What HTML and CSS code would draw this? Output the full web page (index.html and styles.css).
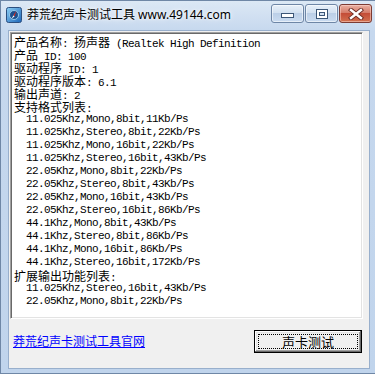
FILE: index.html
```html
<!DOCTYPE html>
<html lang="zh-CN">

<head>
    <meta charset="UTF-8">
    <title>莽荒纪声卡测试工具</title>
    <link rel="stylesheet" href="styles.css">
</head>

<body>
    <div class="window">
        <div class="titlebar">
            <svg class="app-icon" width="16" height="16" viewBox="0 0 16 16">
                <defs>
                    <linearGradient id="ig" x1="0" y1="0" x2="1" y2="1">
                        <stop offset="0" stop-color="#8fd0f5"/>
                        <stop offset="1" stop-color="#1a64b8"/>
                    </linearGradient>
                </defs>
                <rect x="0.5" y="0.5" width="15" height="15" rx="2" fill="url(#ig)" stroke="#2b4f80"/>
                <circle cx="8" cy="8" r="4.5" fill="#1d4f8c" stroke="#a9dcf7" stroke-width="0.8"/>
                <path d="M10.5 3.5 L7.3 8.6 L8.6 9.3 Z" fill="#e02a1c"/>
                <path d="M7.3 8.6 L5.5 12 L8.6 9.3 Z" fill="#ffffff"/>
            </svg>
            <span class="title">莽荒纪声卡测试工具 www.49144.com</span>
            <div class="caption-buttons">
                <div class="cap-btn">
                    <svg width="13" height="6" viewBox="0 0 13 6"><rect x="0.5" y="0.5" width="12" height="4" fill="#fff" stroke="#3c5677"/></svg>
                </div>
                <div class="cap-btn">
                    <svg width="12" height="10" viewBox="0 0 12 10"><rect x="0.5" y="0.5" width="11" height="9" fill="#fff" stroke="#3c5677"/><rect x="3.5" y="3.5" width="5" height="3" fill="#d2e0f0" stroke="#3c5677"/></svg>
                </div>
                <div class="cap-btn close">
                    <svg width="16" height="12" viewBox="0 0 16 12">
                        <path d="M3 2 L13 10 M13 2 L3 10" stroke="#6b2a22" stroke-width="4.2" stroke-linecap="square"/>
                        <path d="M3 2 L13 10 M13 2 L3 10" stroke="#fff" stroke-width="2.4" stroke-linecap="square"/>
                    </svg>
                </div>
            </div>
        </div>

        <div class="client">
            <div class="editbox">
                <div class="line"><span class="zh">产品名称</span>: <span class="zh">扬声器</span> (Realtek High Definition</div>
                <div class="line"><span class="zh">产品</span> ID: 100</div>
                <div class="line"><span class="zh">驱动程序</span> ID: 1</div>
                <div class="line"><span class="zh">驱动程序版本</span>: 6.1</div>
                <div class="line"><span class="zh">输出声道</span>: 2</div>
                <div class="line"><span class="zh">支持格式列表</span>:</div>
                <div class="line">  11.025Khz,Mono,8bit,11Kb/Ps</div>
                <div class="line">  11.025Khz,Stereo,8bit,22Kb/Ps</div>
                <div class="line">  11.025Khz,Mono,16bit,22Kb/Ps</div>
                <div class="line">  11.025Khz,Stereo,16bit,43Kb/Ps</div>
                <div class="line">  22.05Khz,Mono,8bit,22Kb/Ps</div>
                <div class="line">  22.05Khz,Stereo,8bit,43Kb/Ps</div>
                <div class="line">  22.05Khz,Mono,16bit,43Kb/Ps</div>
                <div class="line">  22.05Khz,Stereo,16bit,86Kb/Ps</div>
                <div class="line">  44.1Khz,Mono,8bit,43Kb/Ps</div>
                <div class="line">  44.1Khz,Stereo,8bit,86Kb/Ps</div>
                <div class="line">  44.1Khz,Mono,16bit,86Kb/Ps</div>
                <div class="line">  44.1Khz,Stereo,16bit,172Kb/Ps</div>
                <div class="line"><span class="zh">扩展输出功能列表</span>:</div>
                <div class="line">  11.025Khz,Stereo,16bit,43Kb/Ps</div>
                <div class="line">  22.05Khz,Mono,8bit,22Kb/Ps</div>
            </div>

            <div class="footer">
                <a class="site-link" href="#">莽荒纪声卡测试工具官网</a>
                <div class="test-btn">声卡测试</div>
            </div>
        </div>
    </div>
</body>

</html>
```

FILE: styles.css
```css
body {
    margin: 0;
    font-family: "Noto Sans CJK SC", sans-serif;
}

.window {
    box-sizing: border-box;
    width: 375px;
    height: 374px;
    border: 1px solid #6f87a6;
    border-right: none;
    background: linear-gradient(#dce8f5, #c6d8ee 30px, #c0d4ec);
    display: flex;
    flex-direction: column;
}

.titlebar {
    height: 29px;
    display: flex;
    align-items: flex-start;
    flex-shrink: 0;
}

.app-icon {
    margin: 6px 0 0 5px;
}

.title {
    margin: 5px 0 0 5px;
    font-family: "Noto Sans", "Noto Sans CJK SC", sans-serif;
    font-size: 12px;
    line-height: 18px;
    color: #000;
    text-shadow: 0 0 6px #fff, 0 0 3px #fff;
}

.caption-buttons {
    margin: 3px 3px 0 auto;
    display: flex;
    gap: 1px;
}

.cap-btn {
    box-sizing: border-box;
    width: 33px;
    height: 19px;
    border: 1px solid #6e86a6;
    border-radius: 3px;
    background: linear-gradient(#e8f0f9, #d3e1f1 45%, #bccfe7 50%, #cadcf1);
    box-shadow: inset 0 0 0 1px rgba(255, 255, 255, 0.55);
    display: flex;
    align-items: center;
    justify-content: center;
}

.cap-btn:first-child svg {
    margin-top: 5px;
}

.cap-btn.close {
    border-color: #7c3b33;
    background: linear-gradient(#eab0a2, #d57c69 45%, #c44d37 50%, #d2704f);
    box-shadow: inset 0 0 0 1px rgba(255, 220, 210, 0.5);
}

.client {
    flex: 1;
    margin: 0 5px 4px 7px;
    border: 1px solid #98afcc;
    background: #f0f0f0;
    padding: 1px 6px 0 1px;
    display: flex;
    flex-direction: column;
}

.editbox {
    box-sizing: border-box;
    height: 287px;
    background: #fff;
    border: 1px solid;
    border-color: #a0a0a0 #fff #fff #a0a0a0;
    box-shadow: inset 1px 1px #696969, inset -1px -1px #e3e3e3;
    padding: 2px 3px 0 3px;
    overflow: hidden;
    font-family: "Liberation Mono", monospace;
    font-size: 11px;
    letter-spacing: -0.6px;
    color: #000;
}

.line {
    height: 13px;
    line-height: 13px;
    white-space: pre;
}

.zh {
    display: inline-block;
    height: 13px;
    font-family: "Noto Sans CJK SC", sans-serif;
    font-size: 12px;
    letter-spacing: 0;
    line-height: 13px;
}

.footer {
    margin-top: 11px;
    display: flex;
    justify-content: space-between;
    align-items: flex-start;
}

.site-link {
    margin: 3px 0 0 3px;
    font-size: 12px;
    line-height: 16px;
    color: #0000ff;
    text-decoration: underline;
}

.test-btn {
    position: relative;
    box-sizing: border-box;
    width: 108px;
    height: 23px;
    margin-right: 1px;
    border: 1px solid #000;
    background: #f0f0f0;
    box-shadow: inset -1px -1px #696969, inset 1px 1px #fff, inset -2px -2px #a0a0a0, inset 2px 2px #e3e3e3;
    font-size: 13px;
    line-height: 21px;
    text-align: center;
    color: #000;
}

.test-btn::after {
    content: "";
    position: absolute;
    inset: 3px;
    border: 1px dotted #000;
}
```
